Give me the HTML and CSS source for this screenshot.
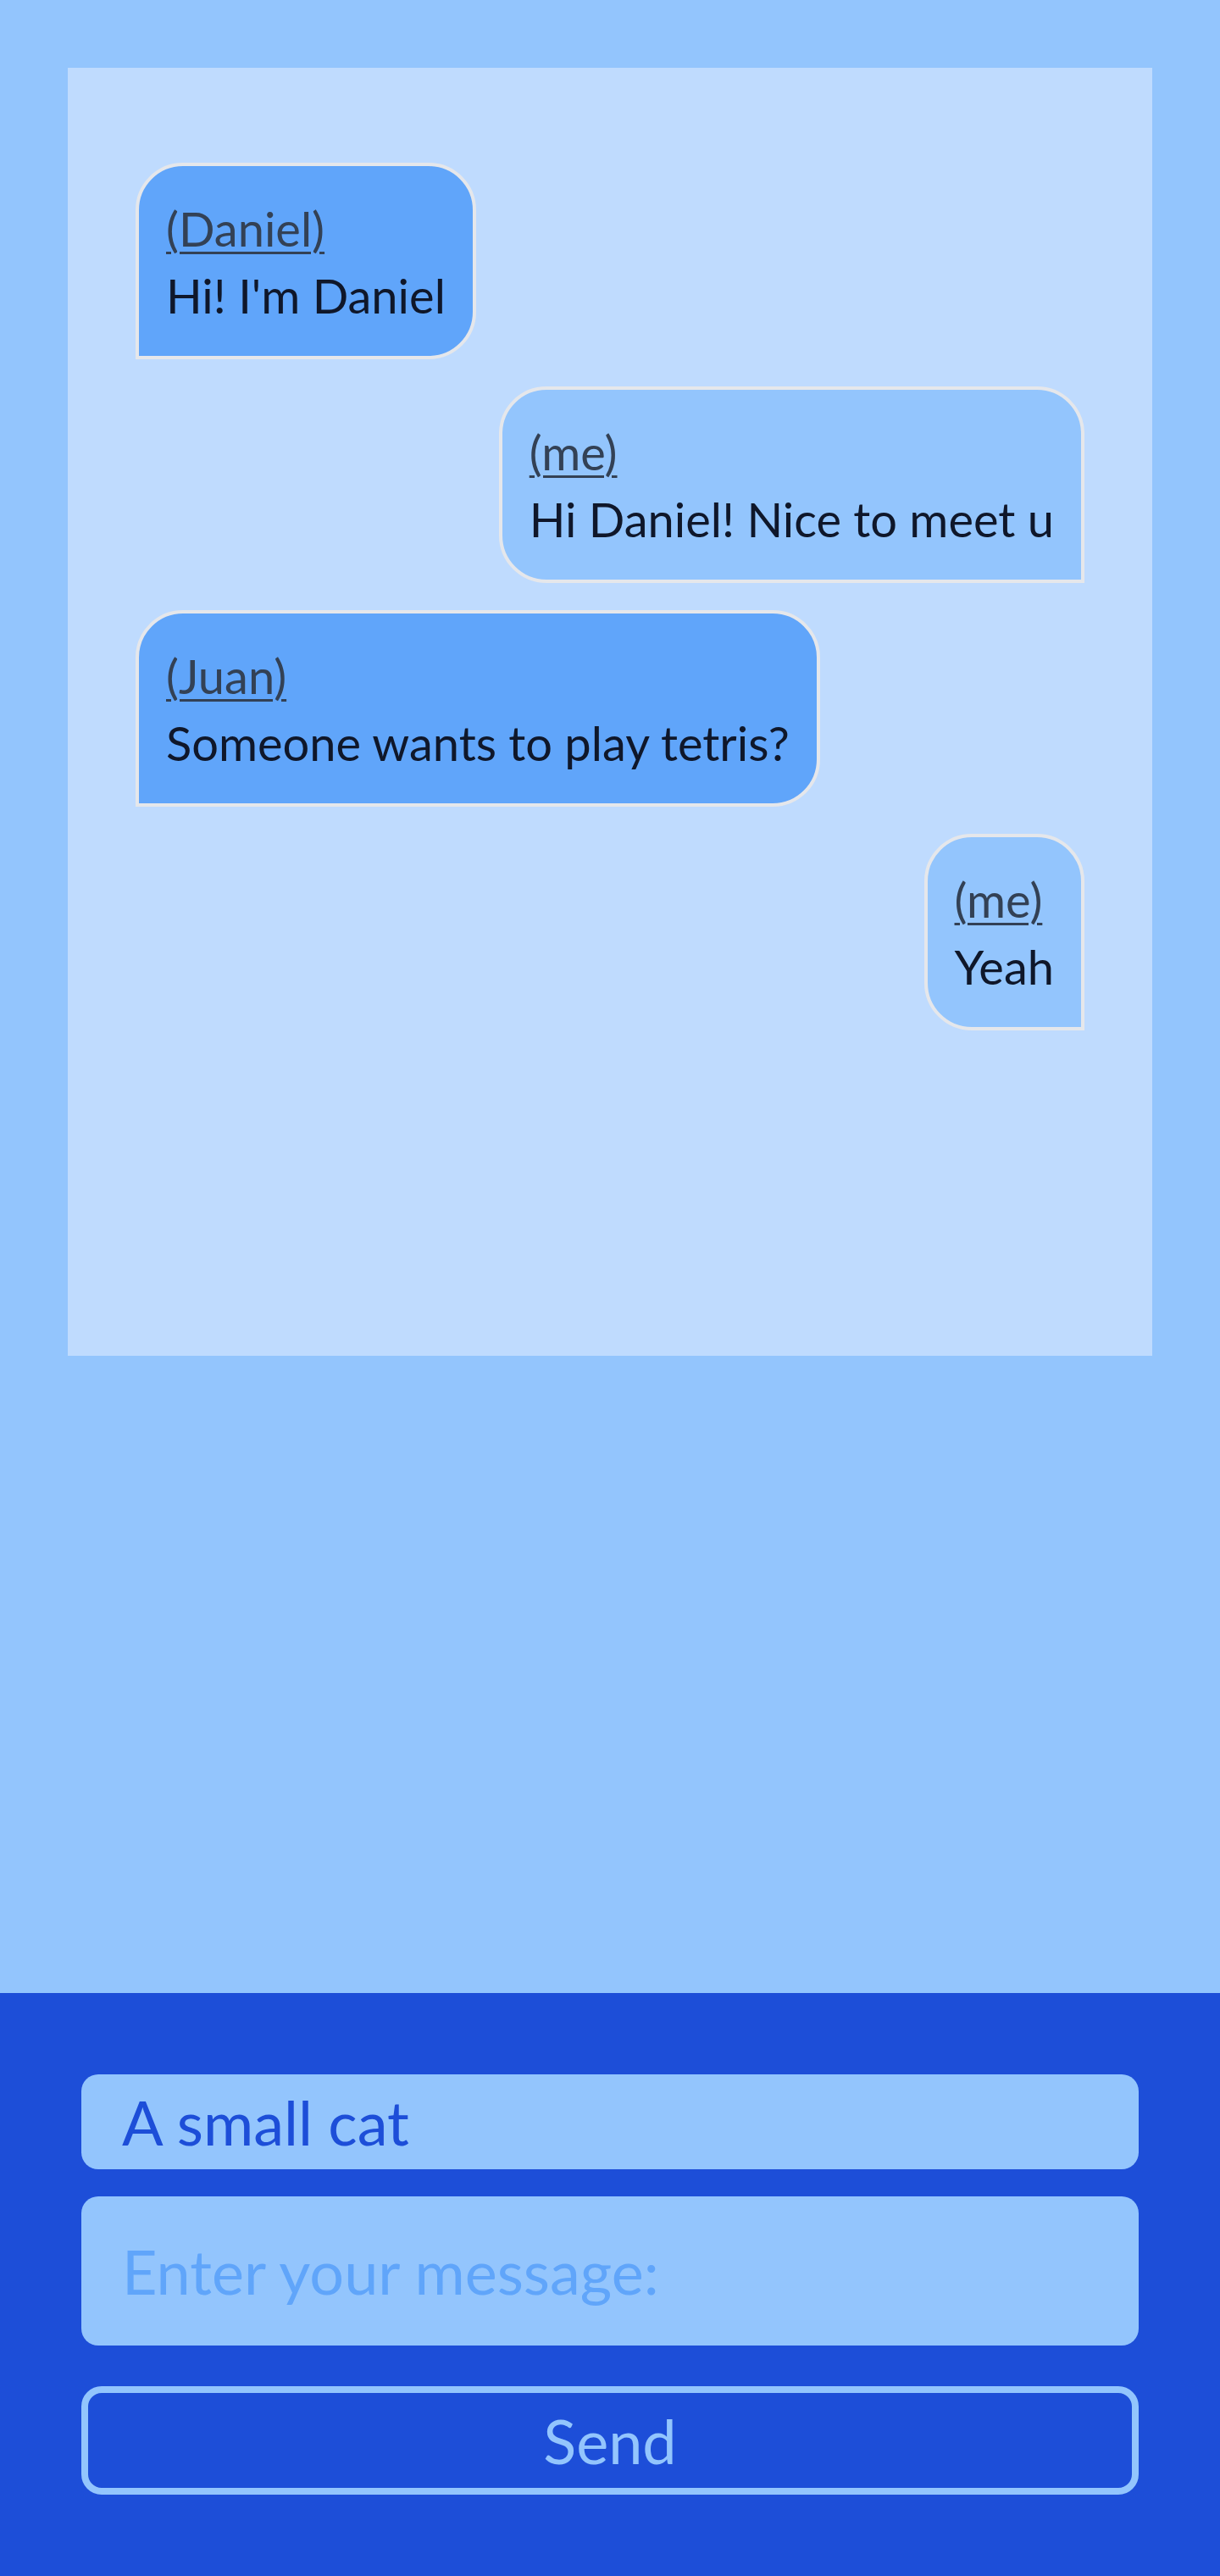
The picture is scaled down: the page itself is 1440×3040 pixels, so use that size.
FILE: index.html
```html
<!DOCTYPE html>
<html lang="en">
<head>
<meta charset="utf-8">
<title>Chat</title>
<link rel="stylesheet" href="styles.css">
</head>
<body>
<div class="page">
  <main class="main">
    <section class="chat">
      <div class="bubble bubble-other">
        <a class="name" href="#">(Daniel)</a>
        <p class="text">Hi! I'm Daniel</p>
      </div>
      <div class="bubble bubble-me">
        <a class="name" href="#">(me)</a>
        <p class="text">Hi Daniel! Nice to meet u</p>
      </div>
      <div class="bubble bubble-other">
        <a class="name" href="#">(Juan)</a>
        <p class="text">Someone wants to play tetris?</p>
      </div>
      <div class="bubble bubble-me">
        <a class="name" href="#">(me)</a>
        <p class="text">Yeah</p>
      </div>
    </section>
  </main>
  <footer class="composer">
    <input class="field field-name" type="text" value="A small cat">
    <textarea class="field field-message" rows="1" placeholder="Enter your message:"></textarea>
    <button class="send" type="button">Send</button>
  </footer>
</div>
</body>
</html>
```

FILE: styles.css
```css
* {
  box-sizing: border-box;
}

html, body {
  margin: 0;
  padding: 0;
}

body {
  font-family: Lato, "Open Sans", "Noto Sans", sans-serif;
  background: #93c5fd;
}

.page {
  min-height: 100vh;
  display: flex;
  flex-direction: column;
}

.main {
  flex: 1;
  padding: 80px;
  background: #93c5fd;
}

.chat {
  height: 1520px;
  background: #bfdbfe;
  padding: 112px 80px 80px;
  display: flex;
  flex-direction: column;
  align-items: flex-start;
  gap: 32px;
}

.bubble {
  border: 4px solid #e5e7eb;
  padding: 34px 32px 32px;
  font-size: 56px;
  line-height: 79px;
  border-radius: 56px;
}

.bubble-other {
  background: #60a5fa;
  border-bottom-left-radius: 0;
}

.bubble-me {
  background: #93c5fd;
  border-bottom-right-radius: 0;
  align-self: flex-end;
}

.name {
  display: block;
  color: #334155;
  text-decoration: underline;
  text-decoration-thickness: 3px;
  text-underline-offset: 6px;
}

.text {
  margin: 0;
  color: #0f172a;
  white-space: nowrap;
}

.composer {
  background: #1d4ed8;
  padding: 96px;
  display: flex;
  flex-direction: column;
}

.field {
  display: block;
  width: 100%;
  border: none;
  outline: none;
  background: #93c5fd;
  color: #1d4ed8;
  font-family: Lato, "Open Sans", "Noto Sans", sans-serif;
  font-size: 72px;
  line-height: 96px;
  border-radius: 20px;
  margin: 0;
}

.field::placeholder {
  color: #60a5fa;
  opacity: 1;
}

.field-name {
  height: 112px;
  padding: 8px 48px;
}

.field-message {
  height: 176px;
  padding: 40px 48px;
  margin-top: 32px;
  resize: none;
  overflow: hidden;
}

.send {
  display: block;
  width: 100%;
  height: 128px;
  margin-top: 48px;
  padding: 8px;
  background: transparent;
  border: 8px solid #93c5fd;
  border-radius: 24px;
  color: #93c5fd;
  font-family: Lato, "Open Sans", "Noto Sans", sans-serif;
  font-size: 72px;
  line-height: 96px;
  cursor: pointer;
}
```
